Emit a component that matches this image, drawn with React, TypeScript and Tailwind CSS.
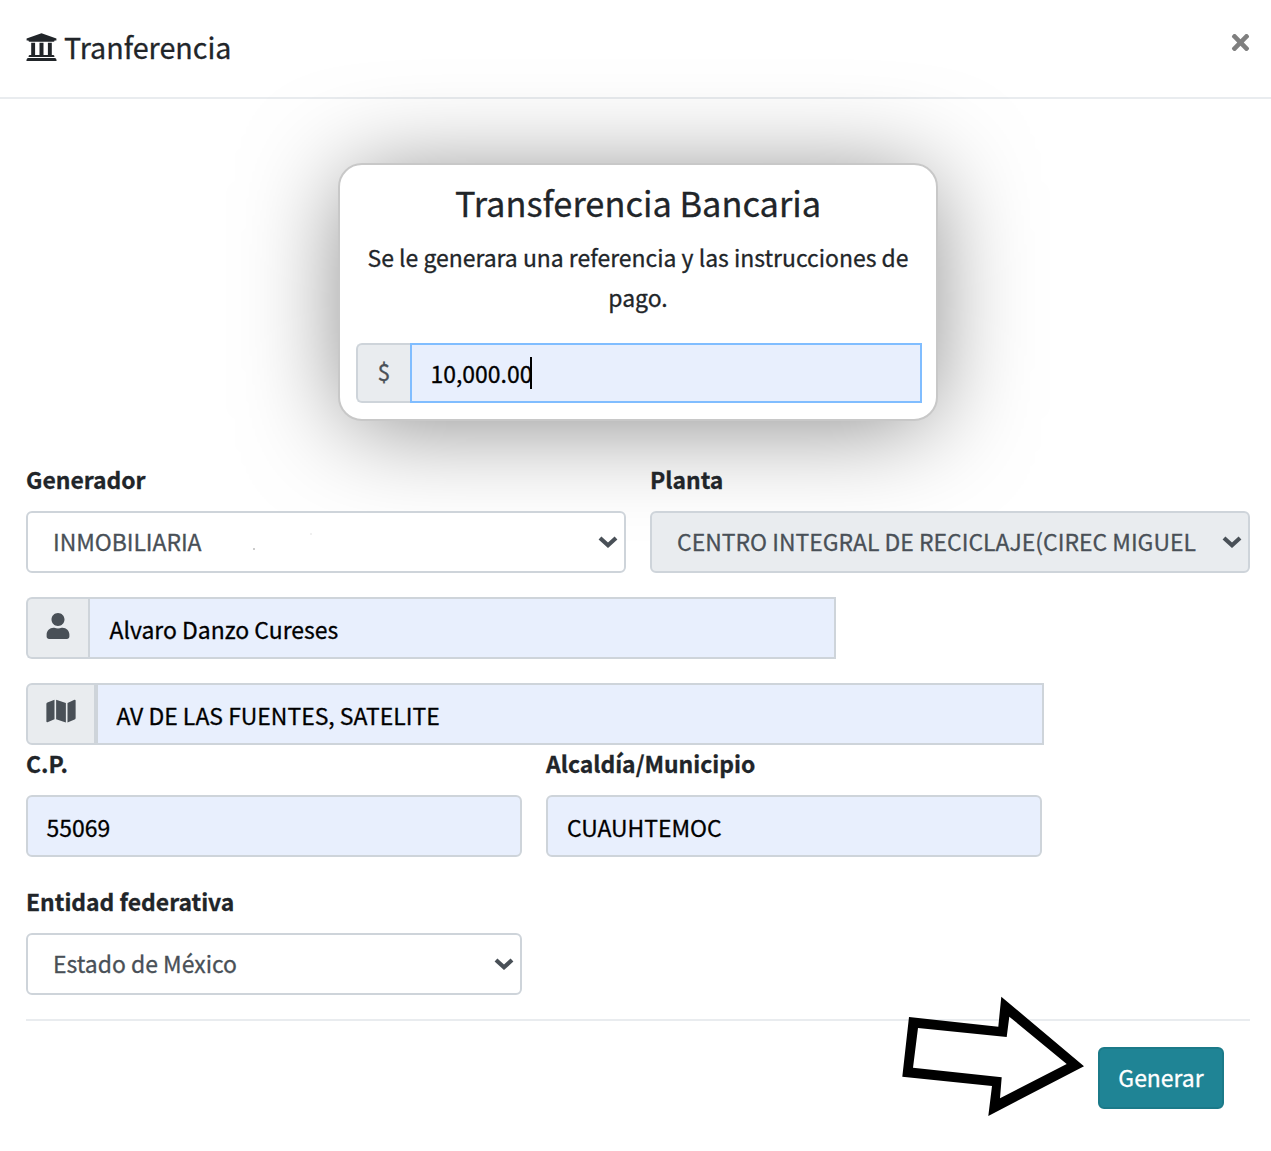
import type { ReactNode } from "react";
import { FaTimes, FaUser, FaMap } from "react-icons/fa";

function BankIcon() {
  return (
    <svg className="mt-[9px] h-7 w-[31px] shrink-0" viewBox="0 0 31 28" fill="#212529">
      <path d="M15.5 0.2 L30.4 5.6 V7.4 H28.6 Q28.4 8.7 27.4 8.7 H3.6 Q2.6 8.7 2.4 7.4 H0.6 V5.6 Z" />
      <path d="M5.2 9.7H9.1V22H13.5V9.7H17.5V22H21.9V9.7H25.8V22H27.3Q28.5 22 28.5 23.9H2.5Q2.5 22 3.7 22H5.2Z" />
      <path d="M1.8 25H29.2Q30.6 25.3 30.6 28H0.4Q0.4 25.3 1.8 25Z" />
    </svg>
  );
}

function Chevron() {
  return (
    <svg className="h-3 w-5 shrink-0" viewBox="0 0 20 12" fill="none">
      <path d="M2 2 L10 9.2 L18 2" stroke="#495057" strokeWidth="4.2" />
    </svg>
  );
}

function Label({ children }: { children: ReactNode }) {
  return <div className="mb-4 h-[30px] text-[22.9px] leading-[29px] font-bold whitespace-nowrap">{children}</div>;
}

function Select({ children, disabled = false }: { children: ReactNode; disabled?: boolean }) {
  return (
    <div
      className={`flex h-[62px] items-center justify-between rounded-md border-2 border-[#ced4da] pl-[25px] pr-[6px] text-[22.95px] whitespace-nowrap text-[#495057] ${disabled ? "bg-[#e9ecef]" : "bg-white"}`}
    >
      <div className="flex items-center pb-0.5">{children}</div>
      <Chevron />
    </div>
  );
}

function Field({ children, className = "" }: { children: ReactNode; className?: string }) {
  return (
    <div className={`flex items-center border-2 bg-[#e8effd] pt-0.5 text-[22.95px] whitespace-nowrap text-black ${className}`}>
      {children}
    </div>
  );
}

function Addon({ children, className = "" }: { children: ReactNode; className?: string }) {
  return (
    <div className={`flex shrink-0 items-center justify-center rounded-l-md border-2 border-[#ced4da] bg-[#e9ecef] text-[23px] text-[#495057] ${className}`}>
      {children}
    </div>
  );
}

export default function App() {
  return (
    <div className="h-[1151px] w-[1271px] overflow-hidden bg-white font-['Noto_Sans_CJK_SC','Noto_Sans',sans-serif] text-[#212529] [-webkit-text-stroke:0.3px]">
      <header className="flex h-[99px] items-start justify-between border-b-2 border-[#e9ecef] pl-[26px] pr-[18px]">
        <div className="flex items-start gap-[7px] pt-6">
          <BankIcon />
          <h1 className="pt-px text-[28.7px] leading-[44px]">Tranferencia</h1>
        </div>
        <FaTimes className="mt-[30px] size-[25px] text-[#7f7f7f]" />
      </header>

      <main className="pl-[26px] pr-[21px] pt-16">
        <section className="ml-[312px] h-[258px] w-[600px] rounded-3xl border-2 border-[#c8c8c8] bg-white pl-4 pr-[14px] pt-[14px] shadow-[0_8px_100px_-8px_rgba(0,0,0,0.5)]">
          <h2 className="-ml-0.5 text-center text-[34.4px] leading-[46px]">Transferencia Bancaria</h2>
          <p className="-ml-0.5 mt-3 text-center text-[22.95px] leading-10">
            Se le generara una referencia y las instrucciones de
            <br />
            pago.
          </p>
          <div className="mt-[26px] flex h-[60px]">
            <Addon className="w-[54px] border-r-0 pb-1">$</Addon>
            <Field className="flex-1 border-[#80bdff] pl-[18.5px]">
              <span className="-mt-0.5">10,000.00</span>
              <span className="-ml-[2.5px] -mt-0.5 h-8 w-0.5 bg-black" />
            </Field>
          </div>
        </section>

        <div className="relative grid grid-cols-2 gap-6 pt-11">
          <div>
            <Label>Generador</Label>
            <Select>
              <span className="tracking-[-0.05px]">INMOBILIARIA</span>
              <svg className="ml-[50px] h-5 w-16" viewBox="0 0 64 20">
                <rect x="1" y="17.5" width="2" height="1" fill="#999" />
                <rect x="58" y="2.5" width="2" height="1" fill="#e2e2e2" />
              </svg>
            </Select>
          </div>
          <div>
            <Label>Planta</Label>
            <Select disabled>
              <span>CENTRO INTEGRAL DE RECICLAJE(CIREC MIGUEL</span>
            </Select>
          </div>
        </div>

        <div className="mt-6 flex h-[62px] w-[810px]">
          <Addon className="w-[62px] border-r-0 pb-1">
            <FaUser className="size-[26px]" />
          </Addon>
          <Field className="flex-1 border-[#ced4da] pl-[19.5px]">Alvaro Danzo Cureses</Field>
        </div>

        <div className="mt-6 flex h-[62px] w-[1018px]">
          <Addon className="w-[70px] pb-1.5">
            <FaMap className="h-[26px] w-[30px]" />
          </Addon>
          <Field className="flex-1 border-[#ced4da] pl-[18.5px]">AV DE LAS FUENTES, SATELITE</Field>
        </div>

        <div className="grid w-[1016px] grid-cols-2 gap-x-6 pt-1">
          <div>
            <Label>C.P.</Label>
            <Field className="h-[62px] rounded-md border-[#ced4da] pl-[18.5px]">55069</Field>
          </div>
          <div>
            <Label>Alcaldía/Municipio</Label>
            <Field className="h-[62px] rounded-md border-[#ced4da] pl-[19px]">CUAUHTEMOC</Field>
          </div>
          <div className="pt-[30px]">
            <Label>Entidad federativa</Label>
            <Select>
              <span>Estado de México</span>
            </Select>
          </div>
        </div>

        <footer className="relative mt-6 flex justify-end border-t-2 border-[#e9ecef] pr-[26px] pt-[26px]">
          <button className="h-[62px] w-[126px] rounded-md border-2 border-[#1b7a89] bg-[#1f8495] pb-0.5 text-[22.95px] text-white">Generar</button>
          <svg className="absolute left-[874px] -top-[26px] h-[122px] w-[186px]" viewBox="900 995 186 122">
            <path d="M914 1022L1002 1032L1005 1007L1075 1065L994 1107L997 1082L908 1072Z" fill="#fff" />
            <path
              fillRule="evenodd"
              fill="#000"
              d="M909 1017L998.3 1026.7L1001.3 996.7L1084 1066.2L988.3 1116L992 1086L902.3 1076.7ZM918 1028L913 1067.7L1001.7 1077.3L1000 1098.3L1066.7 1064L1009.3 1016.7L1006.7 1037Z"
            />
          </svg>
        </footer>
      </main>
    </div>
  );
}
